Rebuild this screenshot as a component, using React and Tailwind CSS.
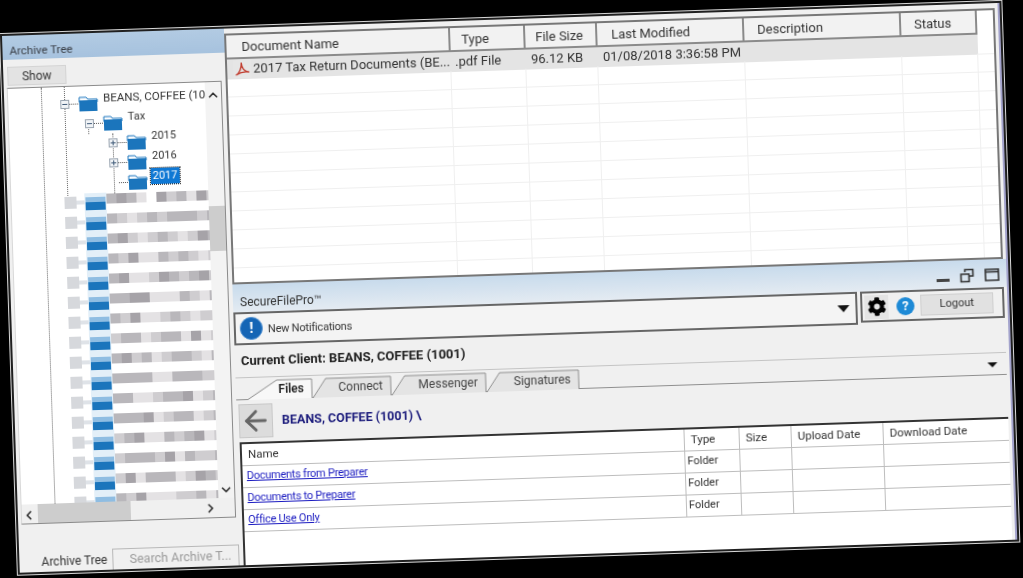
import { ChevronUp, ChevronDown, ChevronLeft, ChevronRight, ArrowLeft } from 'lucide-react';
import { FaCog } from 'react-icons/fa';

const columns = ['Document Name', 'Type', 'File Size', 'Last Modified', 'Description', 'Status'];
const headerPad = [15, 11, 10, 14, 13, 13];

const shades = ['bg-white', 'bg-[#e4e2e4]', 'bg-[#cfcdd0]', 'bg-[#b9b7bb]', 'bg-[#a6a3a8]'];

// Redacted rows of the tree, one digit per mosaic cell
const redacted = [
  '34310423142',
  '32123233323',
  '34212321243',
  '32411323212',
  '34112432342',
  '33441113213',
  '32411232122',
  '23312331412',
  '34231233213',
  '33331133322',
  '33112334123',
  '33341233123',
  '23411323412',
  '23332413223',
  '24133312432',
  '32411122313',
];

function Folder({ className = '' }) {
  return (
    <svg viewBox="0 0 20 18" className={`w-5 h-[18px] shrink-0 ${className}`}>
      <path d="M1 3h7l2 2h9v3H1z" fill="#ffffff" stroke="#1b75bc" strokeWidth="1" />
      <path d="M1 6h18v11H1z" fill="#1b75bc" />
      <path d="M3 3.600h5l1.600 1.800h8" fill="none" stroke="#8fbde2" strokeWidth="0.8" />
    </svg>
  );
}

function Expander({ open }) {
  return (
    <span className="w-[9px] h-[9px] border border-[#9aa5b1] bg-[#f0f3f6] flex items-center justify-center shrink-0 relative translate-y-[1px]">
      <span className="w-[5px] h-px bg-[#3f5a78]" />
      {!open && <span className="absolute w-px h-[5px] bg-[#3f5a78]" />}
    </span>
  );
}

function TreeRow({ indent, open, leaf, label, selected, small }) {
  return (
    <div className="h-5 flex items-center relative" style={{ paddingLeft: indent }}>
      {leaf ? <span className="w-[9px] shrink-0" /> : <Expander open={open} />}
      <span className="w-[9px] border-t border-dotted border-[#555] shrink-0 translate-y-[1px]" />
      <Folder className="translate-y-[1px]" />
      <span
        className={`-translate-y-[4px] whitespace-nowrap leading-4 ${small ? 'text-[11px]' : 'text-[11.5px]'} ${
          selected ? 'ml-[3px] bg-[#0f78d4] text-white px-[2px] outline-1 outline-dotted outline-[#222]' : 'ml-[5px] text-[#333]'
        }`}
      >
        {label}
      </span>
    </div>
  );
}

function RedactedRow({ cells }) {
  return (
    <div className="h-5 flex items-center pl-[53px] blur-[0.7px]">
      <span className="w-3 h-3 bg-[#d6d8dc] shrink-0" />
      <span className="w-2 h-1 bg-[#dfe3e8] shrink-0" />
      <div className="w-[22px] h-[20px] bg-[#e3eff8] flex flex-col justify-center px-[1px] shrink-0 translate-y-[1px]">
        <div className="h-[5px] bg-[#8fbde2]" />
        <div className="h-[8px] bg-[#1b75bc]" />
      </div>
      <div className="flex -translate-y-[3px]">
        {cells.split('').map((c, i) => (
          <span key={i} className={`w-[10px] h-[10px] ${shades[Number(c)]}`} />
        ))}
      </div>
    </div>
  );
}

function ArchiveTree() {
  return (
    <div className="w-[222px] shrink-0 flex flex-col">
      <div className="h-[24px] bg-gradient-to-b from-[#b2cbe3] to-[#a6c2de] flex items-end pl-[7px] text-[11.5px] text-[#3a3f47]">
        Archive Tree
      </div>
      <div className="h-[28px] pl-[4px] pt-[7px]">
        <button className="block w-[59px] h-[19px] bg-[#e3e3e3] border border-[#d4d4d4] text-[12px] text-[#333]">Show</button>
      </div>
      <div className="h-[437px] ml-[3px] mr-[4px] border border-l-[#d8d8d8] border-[#8a8a8a] flex flex-col">
        <div className="flex-1 flex min-h-0">
          <div className="flex-1 relative overflow-hidden bg-white pt-[6px]">
            <div className="absolute left-[33px] top-0 bottom-0 border-l border-dotted border-[#666]" />
            <div className="absolute left-[56px] top-0 h-[117px] border-l border-dotted border-[#666]" />
            <div className="absolute left-[79px] top-[34px] h-[14px] border-l border-dotted border-[#666]" />
            <div className="absolute left-[103px] top-[48px] h-[60px] border-l border-dotted border-[#666]" />
            <TreeRow indent={52} open label="BEANS, COFFEE (10" />
            <TreeRow indent={76} open label="Tax" small />
            <TreeRow indent={99} label="2015" small />
            <TreeRow indent={99} label="2016" small />
            <TreeRow indent={99} leaf label="2017" selected small />
            {redacted.map((cells, i) => (
              <RedactedRow key={i} cells={cells} />
            ))}
          </div>
          <div className="w-[16px] bg-[#f3f3f3] flex flex-col items-center justify-between pt-[6px] pb-[1px] relative">
            <ChevronUp className="w-3.5 h-3.5 text-[#333]" strokeWidth={3} />
            <div className="absolute top-[124px] left-0 right-0 h-[45px] bg-[#cdcdcd]" />
            <ChevronDown className="w-3.5 h-3.5 text-[#333]" strokeWidth={3} />
          </div>
        </div>
        <div className="h-[19px] bg-[#f0f0f0] flex items-center pr-[17px] justify-between relative">
          <ChevronLeft className="w-3.5 h-3.5 text-[#333] translate-y-[1px]" strokeWidth={3} />
          <div className="absolute left-[16px] top-0 bottom-0 w-[93px] bg-[#cdcdcd]" />
          <ChevronRight className="w-3.5 h-3.5 text-[#333]" strokeWidth={3} />
        </div>
      </div>
      <div className="flex-1 flex items-end pl-[17px] pr-[2px]">
        <div className="w-[76px] h-[20px] flex items-center justify-center text-[12px] text-[#333]">Archive Tree</div>
        <div className="flex-1 h-[21px] bg-[#f0f0f0] border border-b-0 border-[#b8b8b8] flex items-center justify-end pr-[7px] text-[12.5px] text-[#9a9a9a] whitespace-nowrap">
          Search Archive T...
        </div>
      </div>
    </div>
  );
}

function PdfIcon() {
  return (
    <span className="w-[18px] h-[18px] bg-[#e6e6e6] flex items-center justify-center shrink-0">
      <svg viewBox="0 0 16 16" className="w-4 h-4" fill="none" stroke="#c0392b" strokeWidth="1.3">
        <path d="M1.500 14C5 12.500 7.500 7 7.200 1.500 7.500 7 10.500 10.800 15 11.200 10 10.200 5.500 11.500 1.500 14Z" />
      </svg>
    </span>
  );
}

function DocumentList() {
  const grid = 'grid grid-cols-[224px_75px_72px_147px_157px_76px_1fr]';
  const emptyRows = Array.from({ length: 11 });
  return (
    <div className="h-[251px] mt-[5px] mr-[3px] border-2 border-[#777] bg-white overflow-hidden">
      <div className={`${grid} h-[24px]`}>
        {columns.map((c, i) => (
          <div key={c} className="bg-[#f2f2f2] border-r-2 border-b-2 border-[#8a8a8a] flex items-center pt-[2px] text-[13px] text-[#333] whitespace-nowrap" style={{ paddingLeft: headerPad[i] }}>
            {c}
          </div>
        ))}
      </div>
      <div className={`${grid} h-[19px]`}>
        <div className="bg-[#e4e4e4] flex items-center pl-[6px] gap-[2px] text-[13px] text-[#333] whitespace-nowrap overflow-hidden">
          <PdfIcon />
          2017 Tax Return Documents (BE...
        </div>
        <div className="bg-[#e4e4e4] flex items-center text-[13px] text-[#333] pl-[4px]">.pdf File</div>
        <div className="bg-[#e4e4e4] flex items-center text-[13px] text-[#333] pl-[5px]">96.12 KB</div>
        <div className="bg-[#e4e4e4] flex items-center text-[13px] text-[#333] pl-[5px] whitespace-nowrap">01/08/2018 3:36:58 PM</div>
        <div className="bg-[#e4e4e4]" />
        <div className="bg-[#e4e4e4]" />
        <div className="border-b border-[#efefef]" />
      </div>
      {emptyRows.map((_, i) => (
        <div key={i} className={`${grid} h-[19px]`}>
          {columns.map((c) => (
            <div key={c} className="border-r border-b border-[#efefef]" />
          ))}
          <div className="border-b border-[#efefef]" />
        </div>
      ))}
    </div>
  );
}

function Tab({ width, slope, label, active }) {
  const shape = `M0 20 L${slope} 1 H${width - 1} V20`;
  return (
    <div className="h-5 relative flex items-center justify-end pr-[9px] text-[12px]" style={{ width }}>
      <svg className="absolute inset-0 w-full h-full" viewBox={`0 0 ${width} 20`} preserveAspectRatio="none">
        <path d={shape} fill={active ? '#f8f8f8' : '#e4e4e4'} stroke="#8f8f8f" strokeWidth="1" />
      </svg>
      <span className={`relative ${active ? 'font-semibold text-[#222]' : 'text-[#444]'}`}>{label}</span>
    </div>
  );
}

function FileTable() {
  const grid = 'grid grid-cols-[442px_55px_52px_92px_1fr]';
  const files = ['Documents from Preparer', 'Documents to Preparer', 'Office Use Only'];
  const heads = ['Type', 'Size', 'Upload Date', 'Download Date'];
  return (
    <div className="flex-1 ml-[2px] mr-[3px] border-t-2 border-l-2 border-[#333] bg-white">
      <div className={`${grid} h-[22px] text-[11.5px] text-[#333] border-b border-[#bdbdbd]`}>
        <div className="flex items-center pl-[6px]">Name</div>
        {heads.map((h) => (
          <div key={h} className="border-l border-[#bdbdbd] flex items-center pl-[6px] pt-[1px]">{h}</div>
        ))}
      </div>
      {files.map((f) => (
        <div key={f} className={`${grid} h-[22px] text-[11px] border-b border-[#bdbdbd]`}>
          <div className="flex items-center pl-[4px]">
            <a className="text-[#1a1ac0] underline tracking-[-0.25px]">{f}</a>
          </div>
          <div className="border-l border-[#bdbdbd] flex items-center pl-[2px] text-[#333]">Folder</div>
          <div className="border-l border-[#bdbdbd]" />
          <div className="border-l border-[#bdbdbd]" />
          <div className="border-l border-[#bdbdbd]" />
        </div>
      ))}
    </div>
  );
}

function SecureFilePro() {
  return (
    <div className="flex-1 flex flex-col min-h-0">
      <div className="h-[28px] bg-gradient-to-b from-[#c8dbec] to-[#e4ebf2] flex items-center pl-[7px] pr-[7px] justify-between">
        <span className="text-[12px] text-[#333] pt-[8px]">SecureFilePro™</span>
        <div className="flex items-center gap-[10px] pt-[2px] text-[#333]">
          <span className="w-[13px] h-[3px] bg-[#444] mt-2" />
          <svg viewBox="0 0 15 15" className="w-[15px] h-[15px]" fill="none" stroke="#333" strokeWidth="1.6">
            <path d="M5.500 4V1.500h8V8H10" />
            <path d="M1.500 6h8v7.500h-8z" />
          </svg>
          <svg viewBox="0 0 15 13" className="w-[15px] h-[13px]" fill="none" stroke="#333" strokeWidth="1.6">
            <path d="M1 1h13v11H1z" />
            <path d="M1 3.500h13" />
          </svg>
        </div>
      </div>
      <div className="h-[33px] flex items-start mr-[3px] gap-[3px]">
        <div className="w-[624px] h-[33px] border-2 border-[#666] bg-[#f4f4f4] flex items-center pl-[4px] pr-[6px]">
          <span className="w-[23px] h-[23px] rounded-full bg-[#1565b5] border border-[#4d8fd1] flex items-center justify-center text-white text-[15px] font-bold shrink-0">!</span>
          <span className="ml-[5px] pt-[4px] text-[11px] text-[#333] tracking-[-0.2px]">New Notifications</span>
          <span className="ml-auto w-0 h-0 border-x-[6px] border-x-transparent border-t-[7px] border-t-[#111]" />
        </div>
        <div className="flex-1 h-[31px] border-2 border-[#666] flex items-center pl-[2px] pr-[9px]">
          <span className="w-[24px] h-[24px] bg-[#e4e4e4] flex items-center justify-center">
            <FaCog className="w-[19px] h-[19px] text-black" />
          </span>
          <span className="ml-[8px] w-[18px] h-[18px] rounded-full bg-[#1e8ad6] text-white text-[13px] font-bold flex items-center justify-center">?</span>
          <button className="ml-auto w-[73px] h-[21px] bg-[#e1e1e1] border border-[#cfcfcf] text-[11px] text-[#333]">Logout</button>
        </div>
      </div>
      <div className="h-[33px] mr-[3px] border-b border-[#c4c4c4] flex items-center pl-[6px] text-[13px] font-bold text-[#222]">
        Current Client: BEANS, COFFEE (1001)
      </div>
      <div className="h-[22px] mr-[3px] pt-[2px] pl-[11px] flex border-b border-[#8f8f8f] relative">
        <Tab width={66} slope={30} label="Files" active />
        <Tab width={79} slope={13} label="Connect" />
        <Tab width={95} slope={13} label="Messenger" />
        <Tab width={93} slope={13} label="Signatures" />
        <span className="absolute right-[9px] top-[9px] w-0 h-0 border-x-[5px] border-x-transparent border-t-[5px] border-t-[#111]" />
      </div>
      <div className="h-[42px] flex items-center pl-[2px]">
        <span className="w-[34px] h-[34px] bg-[#dcdcdc] border border-[#c8c8c8] flex items-center justify-center">
          <ArrowLeft className="w-8 h-8 text-[#666]" strokeWidth={2.2} />
        </span>
        <span className="ml-[9px] text-[12.5px] font-bold text-[#1c1c7c]">BEANS, COFFEE (1001) \</span>
      </div>
      <FileTable />
    </div>
  );
}

export default function App() {
  return (
    <div className="w-[1023px] h-[578px] bg-black overflow-hidden font-['Roboto',sans-serif]">
      <div className="ml-[2px] mt-[36px] w-[998px] h-[537px] origin-top-left rotate-[-1.9deg] flex bg-[#f0f0f0] outline-2 outline-[#202020] shadow-[0_0_0_3px_#d8d8d8] blur-[0.4px]">
        <ArchiveTree />
        <div className="flex-1 flex flex-col min-w-0 border-r-2 border-[#a3a3cc]">
          <DocumentList />
          <SecureFilePro />
        </div>
      </div>
    </div>
  );
}
